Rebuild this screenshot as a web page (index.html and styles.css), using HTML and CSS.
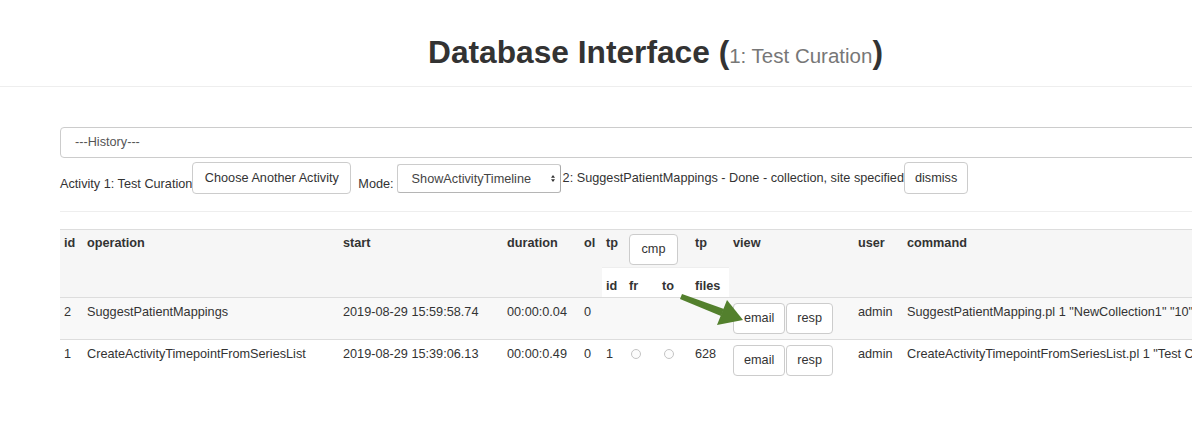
FILE: index.html
```html
<!DOCTYPE html>
<html lang="en">
<head>
<meta charset="utf-8">
<title>Database Interface</title>
<link rel="stylesheet" href="styles.css">
</head>
<body>
<div class="page">
  <header class="masthead">
    <h1 class="title">Database Interface (<small class="sub">1: Test Curation</small>)</h1>
  </header>
  <main class="content">
    <div class="history-select">---History---</div>
    <div class="activity-bar">
      <span class="label">Activity 1: Test Curation</span>
      <button class="btn btn-wide">Choose Another Activity</button>
      <span class="label mode-label">Mode:</span>
      <div class="mode-select">
        <span class="mode-value">ShowActivityTimeline</span>
        <svg class="caret" width="6" height="9" viewBox="0 0 6 9"><path d="M3 1 L5 3.8 H1 Z M3 8 L5 5.2 H1 Z" fill="#333"/></svg>
      </div>
      <span class="status">2: SuggestPatientMappings - Done - collection, site specified</span>
      <button class="btn">dismiss</button>
    </div>
    <div class="divider"></div>
    <div class="table-wrap">
      <table class="timeline">
        <colgroup>
          <col class="c-id"><col class="c-op"><col class="c-start"><col class="c-dur"><col class="c-ol">
          <col class="c-tp"><col class="c-fr"><col class="c-to"><col class="c-files">
          <col class="c-view"><col class="c-user"><col class="c-cmd">
        </colgroup>
        <thead>
          <tr class="head-main">
            <th rowspan="2">id</th>
            <th rowspan="2">operation</th>
            <th rowspan="2">start</th>
            <th rowspan="2">duration</th>
            <th rowspan="2">ol</th>
            <th>tp</th>
            <th colspan="2"><button class="btn btn-cmp">cmp</button></th>
            <th>tp</th>
            <th rowspan="2">view</th>
            <th rowspan="2">user</th>
            <th rowspan="2">command</th>
          </tr>
          <tr class="head-sub">
            <th>id</th>
            <th>fr</th>
            <th>to</th>
            <th>files</th>
          </tr>
        </thead>
        <tbody>
          <tr class="striped">
            <td>2</td>
            <td>SuggestPatientMappings</td>
            <td>2019-08-29 15:59:58.74</td>
            <td>00:00:0.04</td>
            <td>0</td>
            <td></td>
            <td></td>
            <td></td>
            <td></td>
            <td><button class="btn">email</button><button class="btn btn-resp">resp</button></td>
            <td>admin</td>
            <td>SuggestPatientMapping.pl 1 "NewCollection1" "10" "site"</td>
          </tr>
          <tr>
            <td>1</td>
            <td>CreateActivityTimepointFromSeriesList</td>
            <td>2019-08-29 15:39:06.13</td>
            <td>00:00:0.49</td>
            <td>0</td>
            <td>1</td>
            <td><span class="radio"></span></td>
            <td><span class="radio"></span></td>
            <td>628</td>
            <td><button class="btn">email</button><button class="btn btn-resp">resp</button></td>
            <td>admin</td>
            <td>CreateActivityTimepointFromSeriesList.pl 1 "Test Curation"</td>
          </tr>
        </tbody>
      </table>
      <svg class="arrow" width="70" height="40" viewBox="0 0 70 40">
        <polygon points="2,3 44,18 41,25 0,8" fill="#53802d"/>
        <polygon points="47,9 63,29 37,34" fill="#53802d"/>
      </svg>
    </div>
  </main>
</div>
</body>
</html>
```

FILE: styles.css
```css
html, body {
  margin: 0;
  padding: 0;
  background: #fff;
}

body {
  overflow: hidden;
  font-family: "Liberation Sans", Arial, Helvetica, sans-serif;
  font-size: 12.7px;
  line-height: 18px;
  color: #333;
}

.page {
  width: 1311px;
}

.masthead {
  padding: 35px 0 13px;
  border-bottom: 1px solid #eee;
  text-align: center;
}

.title {
  margin: 0;
  font-size: 31.7px;
  line-height: 34px;
  font-weight: bold;
  color: #333;
}

.sub {
  font-size: 20.5px;
  font-weight: normal;
  color: #777;
}

.content {
  padding: 40px 60px 0;
}

.history-select {
  box-sizing: border-box;
  height: 31px;
  padding: 0 14px;
  line-height: 29px;
  border: 1px solid #ccc;
  border-radius: 4px;
  color: #555;
  background: #fff;
}

.activity-bar {
  display: flex;
  align-items: flex-start;
  margin-top: 4px;
  white-space: nowrap;
}

.label {
  margin-top: 13px;
}

.mode-label {
  margin-left: 7px;
}

.btn {
  box-sizing: border-box;
  height: 31px;
  margin: 0;
  padding: 0 10px;
  font-family: inherit;
  font-size: 12.7px;
  line-height: 29px;
  color: #333;
  background: #fff;
  border: 1px solid #ccc;
  border-radius: 4px;
}

.activity-bar .btn {
  height: 32px;
  line-height: 30px;
}

.activity-bar .btn-wide {
  padding: 0 11.5px;
}

.mode-select {
  box-sizing: border-box;
  display: flex;
  align-items: center;
  justify-content: space-between;
  width: 164px;
  height: 29px;
  margin: 2px 0 0 3px;
  padding: 0 4px 0 14px;
  border: 1px solid #ccc;
  border-right-color: #a9a9a9;
  border-bottom-color: #b5b5b5;
  border-radius: 3px;
  background: #fff;
  color: #444;
}

.caret {
  display: block;
}

.status {
  margin: 7px 0 0 2px;
}

.divider {
  margin-top: 17px;
  border-top: 1px solid #eee;
}

.table-wrap {
  position: relative;
  margin-top: 17px;
}

.timeline {
  width: 1191px;
  table-layout: fixed;
  border-collapse: collapse;
  border-top: 1px solid #ddd;
  white-space: nowrap;
}

.c-id { width: 23px; }
.c-op { width: 256px; }
.c-start { width: 164px; }
.c-dur { width: 77px; }
.c-ol { width: 22px; }
.c-tp { width: 23px; }
.c-fr { width: 33px; }
.c-to { width: 33px; }
.c-files { width: 38px; }
.c-view { width: 125px; }
.c-user { width: 49px; }
.c-cmd { width: 348px; }

.timeline th,
.timeline td {
  padding: 5px 4px;
  text-align: left;
  vertical-align: top;
  overflow: hidden;
}

.timeline thead {
  background: #f6f6f6;
  border-bottom: 1px solid #ddd;
}

.timeline th {
  font-weight: bold;
  color: #333;
}

.head-main th {
  padding: 4px 4px 2px;
}

.head-sub th {
  padding: 9px 4px 2px;
  background: #fff;
  border-top: 1px solid #eee;
}

.btn-cmp {
  width: 49px;
  padding: 0;
}

.timeline tbody tr + tr {
  border-top: 1px solid #ddd;
}

.striped {
  background: #f8f8f8;
}

.btn-resp {
  margin-left: 1px;
}

.radio {
  display: inline-block;
  box-sizing: border-box;
  width: 10px;
  height: 10px;
  margin: 4px 0 0 2px;
  border: 1px solid #c4c4c4;
  border-radius: 50%;
  background: #fcfcfc;
  vertical-align: top;
}

.arrow {
  position: absolute;
  left: 620px;
  top: 62px;
}
```
